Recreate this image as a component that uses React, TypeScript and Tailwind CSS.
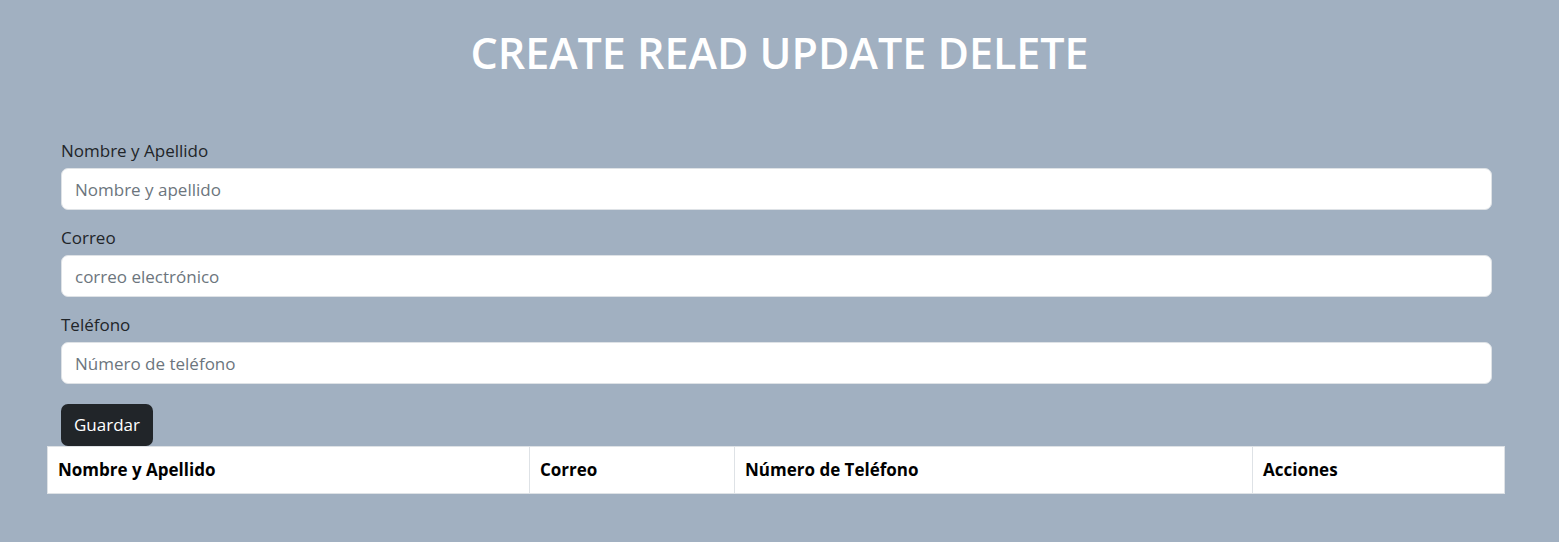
const fields = [
  { label: "Nombre y Apellido", placeholder: "Nombre y apellido" },
  { label: "Correo", placeholder: "correo electrónico" },
  { label: "Teléfono", placeholder: "Número de teléfono" },
];

const columns = [
  { title: "Nombre y Apellido", width: "w-[482px]" },
  { title: "Correo", width: "w-[205px]" },
  { title: "Número de Teléfono", width: "w-[518px]" },
  { title: "Acciones", width: "" },
];

export default function App() {
  return (
    <div className="min-h-[542px] bg-[#a1b0c1] font-['Open_Sans',sans-serif] text-[#212529] text-[17px]">
      <h1 className="pt-[26px] text-center text-[43px] font-semibold leading-[53px] text-white">
        CREATE READ UPDATE DELETE
      </h1>

      <form className="ml-[61px] mr-[67px] mt-[59px] flex flex-col" onSubmit={(e) => e.preventDefault()}>
        {fields.map((f) => (
          <div key={f.label} className="mb-[15px] flex flex-col">
            <label className="mb-[4px] leading-[26px]">{f.label}</label>
            <input
              className="h-[42px] rounded-[7px] border border-[#dee2e6] bg-white px-[13px] text-[17px] outline-none placeholder:text-[#6c757d]"
              placeholder={f.placeholder}
            />
          </div>
        ))}
        <div>
          <button className="mt-[5px] h-[42px] rounded-[7px] bg-[#212529] px-[13px] text-white">Guardar</button>
        </div>
      </form>

      <div className="ml-[47px] mr-[54px]">
        <table className="w-full border-collapse bg-white">
          <thead>
            <tr>
              {columns.map((c) => (
                <th
                  key={c.title}
                  className={`${c.width} border border-[#dee2e6] px-[10px] py-[9px] text-left font-bold leading-[28px] text-black`}
                >
                  {c.title}
                </th>
              ))}
            </tr>
          </thead>
        </table>
      </div>
    </div>
  );
}
